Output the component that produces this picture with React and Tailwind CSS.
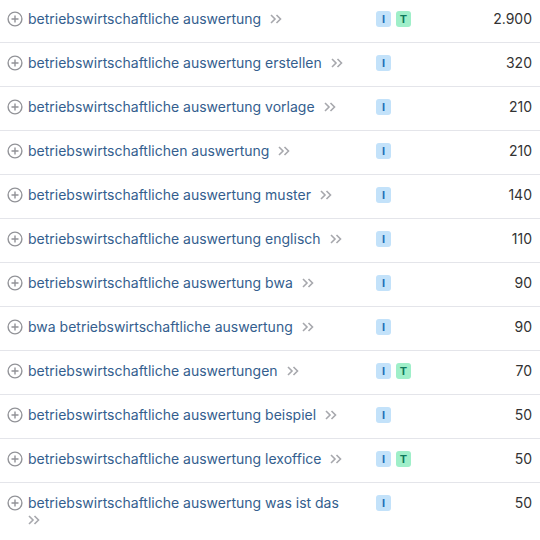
import React from "react";

const rows = [
  { k: "betriebswirtschaftliche auswertung", t: true, n: "2.900" },
  { k: "betriebswirtschaftliche auswertung erstellen", t: false, n: "320" },
  { k: "betriebswirtschaftliche auswertung vorlage", t: false, n: "210" },
  { k: "betriebswirtschaftlichen auswertung", t: false, n: "210" },
  { k: "betriebswirtschaftliche auswertung muster", t: false, n: "140" },
  { k: "betriebswirtschaftliche auswertung englisch", t: false, n: "110" },
  { k: "betriebswirtschaftliche auswertung bwa", t: false, n: "90" },
  { k: "bwa betriebswirtschaftliche auswertung", t: false, n: "90" },
  { k: "betriebswirtschaftliche auswertungen", t: true, n: "70" },
  { k: "betriebswirtschaftliche auswertung beispiel", t: false, n: "50" },
  { k: "betriebswirtschaftliche auswertung lexoffice", t: true, n: "50" },
  { k: "betriebswirtschaftliche auswertung was ist das", t: false, n: "50" },
];

function Plus() {
  return (
    <svg width="16" height="16" viewBox="0 0 16 16" fill="none">
      <circle cx="8" cy="8" r="6.9" stroke="#929398" strokeWidth="1.4" />
      <path d="M8 4.5v7M4.5 8h7" stroke="#929398" strokeWidth="1.4" />
    </svg>
  );
}

function Chev() {
  return (
    <svg width="13" height="12" viewBox="0 0 13 12" fill="none" className="inline-block align-[-1px]">
      <path d="M1 2l4 4-4 4M6.5 2l4 4-4 4" stroke="#a7a8ad" strokeWidth="1.6" />
    </svg>
  );
}

export default function App() {
  return (
    <div className="w-[540px] h-[540px] overflow-hidden bg-white">
      <div className="mt-[-1px] font-['Inter','Noto_Sans',sans-serif]">
        {rows.map((r, i) => (
          <div
            key={i}
            className={
              i === rows.length - 1
                ? "flex items-start min-h-[44px] pt-[11px] pb-[12px]"
                : "flex items-start h-[44px] border-b border-[#e4e5ea] pt-[11px]"
            }
          >
            <div className="w-[28px] shrink-0 pl-[7px] pt-[1px]">
              <Plus />
            </div>
            <div className="w-[326px] shrink-0 text-[14px] leading-[17px] text-[#345e8e]">
              {r.k}
              <span className="tracking-[5px]"> </span>
              <Chev />
            </div>
            <div className="flex gap-[5px] flex-1 pl-[22px] pt-[1px]">
              <span className="w-[15px] h-[16px] rounded-[3px] bg-[#c3e2fa] text-[#1f6fb8] text-[11px] font-bold leading-[16px] text-center">I</span>
              {r.t && (
                <span className="w-[15px] h-[16px] rounded-[3px] bg-[#9fefc9] text-[#0f7a5c] text-[11px] font-bold leading-[16px] text-center">T</span>
              )}
            </div>
            <div className="pr-[8px] text-[14px] leading-[18px] text-[#333333]">{r.n}</div>
          </div>
        ))}
      </div>
    </div>
  );
}
